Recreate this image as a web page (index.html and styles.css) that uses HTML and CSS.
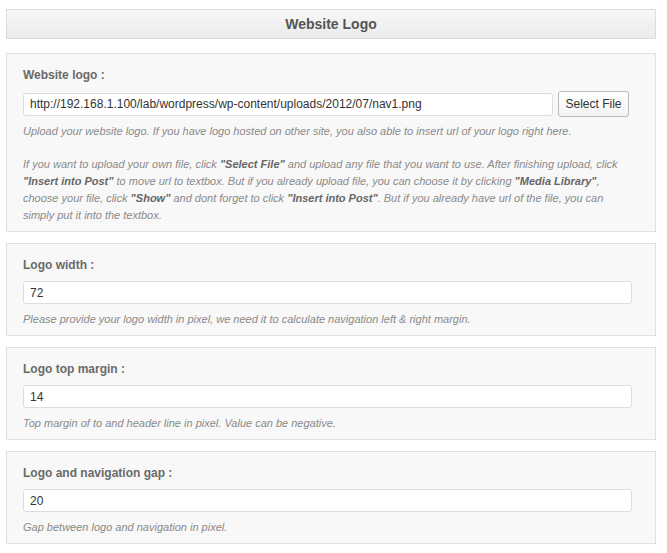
FILE: index.html
```html
<!DOCTYPE html>
<html>
<head>
<meta charset="utf-8">
<link rel="stylesheet" href="styles.css">
</head>
<body>
<div class="page">
  <div class="header">Website Logo</div>

  <div class="panel">
    <div class="label">Website logo :</div>
    <div class="row">
      <input class="field field-grow" type="text" value="http://192.168.1.100/lab/wordpress/wp-content/uploads/2012/07/nav1.png">
      <button class="btn" type="button">Select File</button>
    </div>
    <p class="help help-first">Upload your website logo. If you have logo hosted on other site, you also able to insert url of your logo right here.</p>
    <p class="help help-gap">If you want to upload your own file, click <b>"Select File"</b> and upload any file that you want to use. After finishing upload, click <b>"Insert into Post"</b> to move url to textbox. But if you already upload file, you can choose it by clicking <b>"Media Library"</b>, choose your file, click <b>"Show"</b> and dont forget to click <b>"Insert into Post"</b>. But if you already have url of the file, you can simply put it into the textbox.</p>
  </div>

  <div class="panel">
    <div class="label">Logo width :</div>
    <input class="field" type="text" value="72">
    <p class="help">Please provide your logo width in pixel, we need it to calculate navigation left &amp; right margin.</p>
  </div>

  <div class="panel">
    <div class="label">Logo top margin :</div>
    <input class="field" type="text" value="14">
    <p class="help">Top margin of to and header line in pixel. Value can be negative.</p>
  </div>

  <div class="panel">
    <div class="label">Logo and navigation gap :</div>
    <input class="field" type="text" value="20">
    <p class="help">Gap between logo and navigation in pixel.</p>
  </div>
</div>
</body>
</html>
```

FILE: styles.css
```css
html, body {
  margin: 0;
  padding: 0;
  background: #ffffff;
}

body {
  font-family: "Liberation Sans", Arial, sans-serif;
}

.page {
  width: 650px;
  margin: 9px 0 0 6px;
}

.header {
  height: 28px;
  line-height: 28px;
  border: 1px solid #dcdcdc;
  background: linear-gradient(#f7f7f7, #ebebeb);
  text-align: center;
  font-size: 14px;
  font-weight: bold;
  color: #555555;
  margin-bottom: 14px;
}

.panel {
  border: 1px solid #e0e0e0;
  background: #f8f8f8;
  padding: 13px 23px 7px 16px;
  margin-bottom: 11px;
}

.label {
  font-size: 12px;
  font-weight: bold;
  line-height: 16px;
  color: #6a6a6a;
  margin-bottom: 8px;
}

.row {
  display: flex;
  align-items: center;
  gap: 5px;
  padding-right: 3px;
}

.field {
  display: block;
  box-sizing: border-box;
  width: 100%;
  height: 23px;
  border: 1px solid #dddddd;
  border-radius: 3px;
  background: #ffffff;
  padding: 0 6px;
  margin: 0;
  font-family: "Liberation Sans", Arial, sans-serif;
  font-size: 12px;
  color: #333333;
  outline: none;
}

.field-grow {
  flex: 1;
  width: auto;
}

.btn {
  box-sizing: border-box;
  height: 26px;
  width: 71px;
  border: 1px solid #bbbbbb;
  border-radius: 3px;
  background: linear-gradient(#ffffff, #f3f3f3);
  font-family: "Liberation Sans", Arial, sans-serif;
  font-size: 12px;
  color: #333333;
  padding: 0;
  margin: 0;
}

.help {
  margin: 7px 0 0;
  font-size: 11px;
  line-height: 17px;
  font-style: italic;
  color: #8a8a8a;
}

.help b {
  color: #666666;
}

.help-first {
  margin-top: 6px;
}

.help-gap {
  margin-top: 16px;
}
```
